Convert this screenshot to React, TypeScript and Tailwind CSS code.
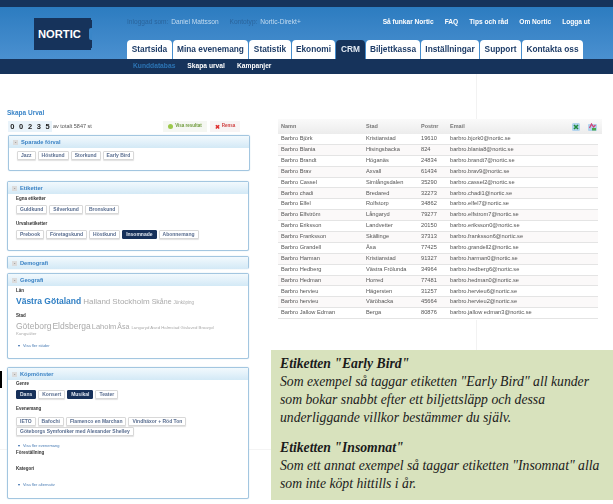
const tabs = [
  { label: "Startsida", w: "w-[45px]" },
  { label: "Mina evenemang", w: "w-[75px]" },
  { label: "Statistik", w: "w-[42px]" },
  { label: "Ekonomi", w: "w-[43px]" },
  { label: "CRM", w: "w-[29px]", active: true },
  { label: "Biljettkassa", w: "w-[54px]" },
  { label: "Inställningar", w: "w-[58px]" },
  { label: "Support", w: "w-[41px]" },
  { label: "Kontakta oss", w: "w-[61px]" },
];

const rows = [
  ["Barbro Björk", "Kristianstad", "19610", "barbro.bjork0@nortic.se"],
  ["Barbro Blania", "Hisingsbacka", "824", "barbro.blania8@nortic.se"],
  ["Barbro Brandt", "Höganäs", "24834", "barbro.brandt7@nortic.se"],
  ["Barbro Brav", "Axvall", "61434", "barbro.brav9@nortic.se"],
  ["Barbro Cassel", "Simlångsdalen", "35290", "barbro.cassel2@nortic.se"],
  ["Barbro chadi", "Bredared", "32273", "barbro.chadi1@nortic.se"],
  ["Barbro Elfel", "Rolfstorp", "34862", "barbro.elfel7@nortic.se"],
  ["Barbro Elfström", "Långaryd", "79277", "barbro.elfstrom7@nortic.se"],
  ["Barbro Eriksson", "Landvetter", "20150", "barbro.eriksson0@nortic.se"],
  ["Barbro Franksson", "Skällinge", "37313", "barbro.franksson6@nortic.se"],
  ["Barbro Grandell", "Åsa", "77425", "barbro.grandell2@nortic.se"],
  ["Barbro Harman", "Kristianstad", "91327", "barbro.harman0@nortic.se"],
  ["Barbro Hedberg", "Västra Frölunda", "34964", "barbro.hedberg6@nortic.se"],
  ["Barbro Hedman", "Horred", "77481", "barbro.hedman0@nortic.se"],
  ["Barbro hervieu", "Hägersten", "31257", "barbro.hervieu6@nortic.se"],
  ["Barbro hervieu", "Väröbacka", "45664", "barbro.hervieu2@nortic.se"],
  ["Barbro Jallow Edman", "Berga", "80876", "barbro.jallow edman3@nortic.se"],
];

function Chip({ label, on }: { label: string; on?: boolean }) {
  return (
    <span
      className={
        on
          ? "flex h-[9px] items-center rounded-[1px] border border-[#16305a] bg-[#16305a] px-[3px] text-[5px] font-bold whitespace-nowrap text-[#dfe6f0]"
          : "flex h-[9px] items-center rounded-[1px] border border-[#d8d8d8] bg-white px-[3px] text-[5px] font-bold whitespace-nowrap text-[#5a6e90] shadow-[0_1px_1px_rgba(0,0,0,0.12)]"
      }
    >
      {label}
    </span>
  );
}

function Panel({ title, className, children }: { title: string; className: string; children?: React.ReactNode }) {
  return (
    <section className={`w-[242px] rounded-[2px] border border-[#a3c6e0] bg-white shadow-[0_0_1px_#a3c6e0] ${className}`}>
      <div className="flex h-[12px] items-center gap-[3px] bg-gradient-to-b from-[#f2f9fd] to-[#d3e9f6] pl-[4px]">
        <span className="flex h-[5px] w-[5px] items-center justify-center bg-[#dcdcdc] text-[5px] leading-none text-[#666]">-</span>
        <span className="text-[5.7px] font-bold text-[#3a82c4]">{title}</span>
      </div>
      {children}
    </section>
  );
}

function Label({ children }: { children: React.ReactNode }) {
  return <div className="text-[4.5px] leading-[7px] font-bold text-[#333]">{children}</div>;
}

function More({ children }: { children: React.ReactNode }) {
  return (
    <div className="flex h-[6px] items-center gap-[3px] pl-[2px] text-[4px] text-[#4a7db5]">
      <span className="h-0 w-0 border-x-[1.5px] border-t-[2px] border-x-transparent border-t-[#2f66a8]" />
      {children}
    </div>
  );
}

export default function App() {
  return (
    <div className="relative h-[504px] w-[613px] overflow-hidden bg-white font-['Liberation_Sans',sans-serif]">
      <span className="absolute left-[476px] top-[74px] h-[46px] w-px bg-[#f2f2f2]" />
      <span className="absolute left-[476px] top-[320px] h-[30px] w-px bg-[#f2f2f2]" />
      <span className="absolute left-0 top-[449px] h-px w-[271px] bg-[#f4f4f4]" />
      <div className="relative blur-[0.35px]">
        <header className="border-t-[7px] border-[#16335b]">
          <div className="flex h-[52px] bg-gradient-to-b from-[#2c7cc0] to-[#4a90d0]">
            <div className="relative ml-[34px] mt-[11px] flex h-[32px] w-[58px] items-center bg-[#16335b] pl-[4px] text-[11.2px] font-bold text-white">
              NORTIC
              <span className="absolute right-0 top-[10px] h-[12px] w-[3px] rounded-l-[2px] bg-[#3a86c8]" />
              <span className="absolute right-0 top-0 h-[2px] w-[1px] bg-[#3180c3]" />
              <span className="absolute right-0 bottom-0 h-[2px] w-[1px] bg-[#4189cb]" />
            </div>
            <div className="ml-[35px] flex w-[463px] flex-col">
              <div className="flex h-[33px] items-start justify-between pt-[11px] text-[6.6px] leading-[8px]">
                <div className="flex gap-[11px] whitespace-nowrap">
                  <span className="text-[#2a649c]">
                    Inloggad som: <span className="ml-px text-[#c4dcf0]">Daniel Mattsson</span>
                  </span>
                  <span className="text-[#2a649c]">
                    Kontotyp: <span className="ml-px text-[#c4dcf0]">Nortic-Direkt+</span>
                  </span>
                </div>
                <div className="flex gap-[11px] whitespace-nowrap font-bold text-white">
                  <span>Så funkar Nortic</span>
                  <span>FAQ</span>
                  <span>Tips och råd</span>
                  <span>Om Nortic</span>
                  <span>Logga ut</span>
                </div>
              </div>
              <nav className="flex h-[19px] gap-px whitespace-nowrap">
                {tabs.map((t) => (
                  <span
                    key={t.label}
                    className={`flex shrink-0 items-center justify-center rounded-t-[4px] text-[8.3px] font-bold ${t.w} ${
                      t.active ? "bg-[#16335b] text-[#e4ebf4]" : "bg-white text-[#1f3d68]"
                    }`}
                  >
                    {t.label}
                  </span>
                ))}
              </nav>
            </div>
          </div>
          <div className="flex h-[15px] items-center gap-[12px] bg-[#16335b] pl-[133px] text-[6.7px] font-bold">
            <span className="text-[#2c74b4]">Kunddatabas</span>
            <span className="text-white">Skapa urval</span>
            <span className="text-white">Kampanjer</span>
          </div>
        </header>

        <main className="flex">
          <div className="w-[270px] shrink-0">
            <div className="pl-[7px] pt-[35px] text-[6.5px] font-bold leading-[8px] text-[#3a85c8]">Skapa Urval</div>
            <div className="mt-[4px] flex h-[11px] items-center pl-[8px]">
              <div className="flex h-[11px] w-[44px] items-center justify-around bg-[#e9f3fa] text-[7.5px] font-bold text-[#222]">
                {[0, 0, 2, 3, 5].map((d, i) => (
                  <span key={i}>{d}</span>
                ))}
              </div>
              <span className="ml-[1px] w-[110px] text-[5.5px] text-[#555]">av totalt 5847 st</span>
              <span className="flex h-[11px] w-[44px] items-center justify-center gap-[2px] bg-[#f5f7f2] text-[4.5px] font-bold text-[#6e9a3a]">
                <span className="h-[5px] w-[5px] rounded-full bg-[#9cc84a]" />
                Visa resultat
              </span>
              <span className="ml-[3px] flex h-[11px] w-[30px] items-center justify-center gap-[2px] bg-[#f8f4f4] text-[4.5px] font-bold text-[#d04040]">
                <span className="text-[6px] leading-none text-[#e03030]">✖</span>
                Rensa
              </span>
            </div>

            <Panel title="Sparade förval" className="ml-[8px] mt-[3px] h-[36px]">
              <div className="flex gap-[2px] pl-[8px] pt-[3px]">
                <Chip label="Jazz" />
                <Chip label="Höstkund" />
                <Chip label="Storkund" />
                <Chip label="Early Bird" />
              </div>
            </Panel>

            <Panel title="Etiketter" className="ml-[7px] mt-[10px] h-[70px]">
              <div className="pl-[8px] pt-[1px]">
                <Label>Egna etiketter</Label>
                <div className="mt-[3px] flex gap-[2px]">
                  <Chip label="Guldkund" />
                  <Chip label="Silverkund" />
                  <Chip label="Bronskund" />
                </div>
                <div className="mt-[6px]">
                  <Label>Urvalsetiketter</Label>
                </div>
                <div className="mt-[3px] flex gap-[2px]">
                  <Chip label="Prebook" />
                  <Chip label="Företagskund" />
                  <Chip label="Höstkund" />
                  <Chip label="Insomnade" on />
                  <Chip label="Abonnemang" />
                </div>
              </div>
            </Panel>

            <Panel title="Demografi" className="ml-[7px] mt-[5px] h-[13px]" />

            <Panel title="Geografi" className="ml-[7px] mt-[4px] h-[86px]">
              <div className="pl-[8px] pt-[1px]">
                <Label>Län</Label>
                <div className="mt-[1px] flex h-[13px] items-baseline gap-[2px] whitespace-nowrap text-[#aaa]">
                  <span className="text-[8.5px] font-bold text-[#2f7fc4]">Västra Götaland</span>
                  <span className="text-[8px]">Halland</span>
                  <span className="text-[8px]">Stockholm</span>
                  <span className="text-[7px]">Skåne</span>
                  <span className="text-[4.5px]">Jönköping</span>
                </div>
                <div className="mt-[4px]">
                  <Label>Stad</Label>
                </div>
                <div className="mt-[2px] flex h-[10px] items-baseline gap-[1px] whitespace-nowrap leading-[10px] text-[#aaa]">
                  <span className="text-[8.5px]">Göteborg</span>
                  <span className="text-[8.5px]">Eldsberga</span>
                  <span className="text-[7.5px]">Laholm</span>
                  <span className="text-[7px]">Åsa</span>
                  <span className="ml-[1px] text-[4.3px]">Långaryd Ased Halmstad Gislaved Broaryd</span>
                </div>
                <div className="text-[4.3px] leading-[6px] text-[#aaa]">Kungsälter</div>
                <div className="mt-[6px]">
                  <More>Visa fler städer</More>
                </div>
              </div>
            </Panel>

            <Panel title="Köpmönster" className="ml-[7px] mt-[8px] h-[132px]">
              <div className="pl-[8px]">
                <Label>Genre</Label>
                <div className="mt-[3px] flex gap-[2px]">
                  <Chip label="Dans" on />
                  <Chip label="Konsert" />
                  <Chip label="Musikal" on />
                  <Chip label="Teater" />
                </div>
                <div className="mt-[6px]">
                  <Label>Evenemang</Label>
                </div>
                <div className="mt-[5px] flex w-[180px] flex-wrap gap-x-[2px] gap-y-[1px]">
                  <Chip label="IETO" />
                  <Chip label="Bafochi" />
                  <Chip label="Flamenco en Marchan" />
                  <Chip label="Vindhäxor + Röd Ton" />
                  <Chip label="Göteborgs Symfoniker med Alexander Shelley" />
                </div>
                <div className="mt-[7px]">
                  <More>Visa fler evenemang</More>
                </div>
                <Label>Föreställning</Label>
                <div className="mt-[9px]">
                  <Label>Kategori</Label>
                </div>
                <div className="mt-[10px]">
                  <More>Visa fler alternativ</More>
                </div>
              </div>
            </Panel>
          </div>

          <div className="ml-[8px] mt-[45px] w-[320px]">
            <div className="flex h-[15px] w-[324px] items-center bg-gradient-to-b from-[#fafafa] to-[#ececec] pl-[3px] text-[5.5px] font-bold text-[#777]">
              <span className="w-[85px]">Namn</span>
              <span className="w-[55px]">Stad</span>
              <span className="w-[29px]">Postnr</span>
              <span className="w-[122px]">Email</span>
              <svg width="8" height="8" viewBox="0 0 8 8">
                <rect width="8" height="8" rx="1.5" fill="#b4d4ee" />
                <path d="M2 2l4 4M6 2L2 6" stroke="#1f8a3a" strokeWidth="1.6" />
              </svg>
              <svg className="ml-[8px]" width="9" height="8" viewBox="0 0 9 8">
                <rect y="1" width="9" height="7" rx="1" fill="#b4d4ee" />
                <path d="M1.5 5l2-4 2 3 2-2" stroke="#d0457a" strokeWidth="1.3" fill="none" />
                <rect x="4" y="5" width="4" height="2.5" fill="#4aa84a" />
              </svg>
            </div>
            {rows.map((r, i) => (
              <div
                key={i}
                className={`flex h-[10.9px] items-center border-b border-[#e4e4e4] pl-[3px] text-[5.7px] leading-none text-[#555] ${
                  i % 2 ? "bg-[#fbf9f9]" : "bg-white"
                }`}
              >
                <span className="w-[85px]">{r[0]}</span>
                <span className="w-[55px]">{r[1]}</span>
                <span className="w-[29px]">{r[2]}</span>
                <span>{r[3]}</span>
              </div>
            ))}
          </div>
        </main>
      </div>

      <span className="absolute left-0 top-[371px] h-[17px] w-[2px] bg-black" />

      <aside className="absolute left-[271px] top-[350px] h-[150px] w-[342px] bg-[#d8e2bd] pl-[9px] pt-[5px] font-['Liberation_Serif',serif] text-[13.7px] italic leading-[18px] text-[#1b1b1b]">
        <p className="font-bold">Etiketten "Early Bird"</p>
        <p>Som exempel så taggar etiketten "Early Bird" all kunder</p>
        <p>som bokar snabbt efter ett biljettsläpp och dessa</p>
        <p>underliggande villkor bestämmer du själv.</p>
        <p className="mt-[12px] font-bold">Etiketten "Insomnat"</p>
        <p>Som ett annat exempel så taggar etiketten "Insomnat" alla</p>
        <p>som inte köpt hittills i år.</p>
      </aside>
    </div>
  );
}
